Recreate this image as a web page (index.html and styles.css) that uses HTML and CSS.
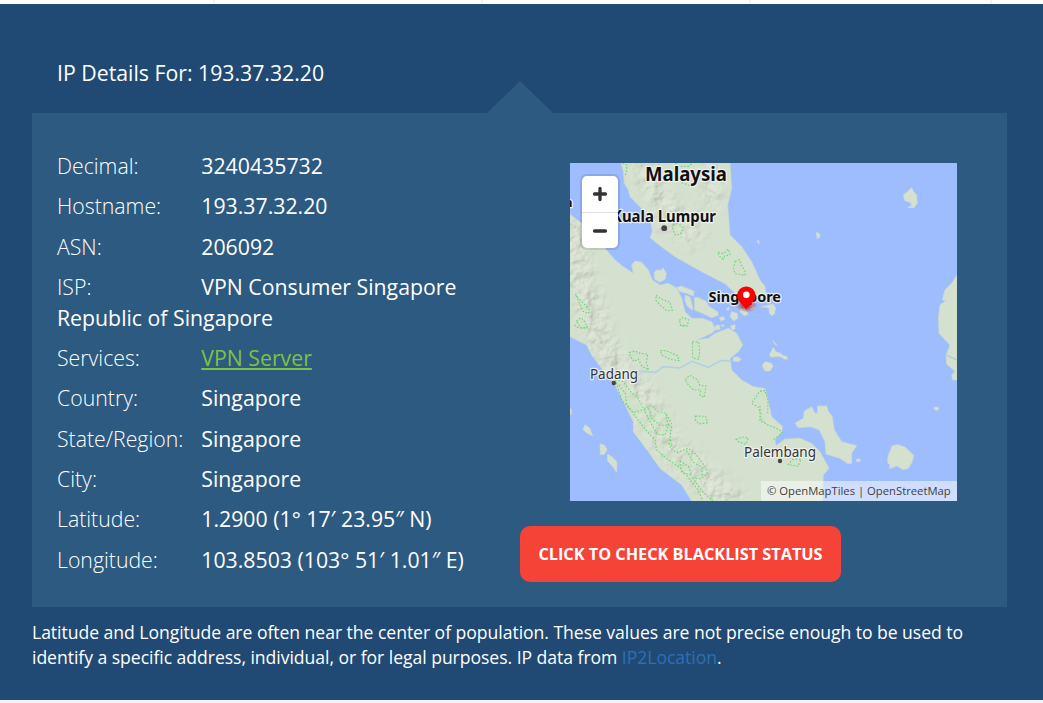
FILE: index.html
```html
<!DOCTYPE html>
<html lang="en">
<head>
<meta charset="utf-8">
<title>IP Details</title>
<link rel="stylesheet" href="styles.css">
</head>
<body>
<div class="tabs"><span class="tab tab-first"></span><span class="tab"></span><span class="tab"></span><span class="tab tab-last"></span></div>
<main class="details">
  <h1 class="title">IP Details For: 193.37.32.20</h1>
  <section class="panel">
    <div class="info">
      <p class="row"><span class="label">Decimal:</span><span>3240435732</span></p>
      <p class="row"><span class="label">Hostname:</span><span>193.37.32.20</span></p>
      <p class="row"><span class="label">ASN:</span><span>206092</span></p>
      <p class="row"><span class="label">ISP:</span><span>VPN Consumer Singapore Republic of Singapore</span></p>
      <p class="row"><span class="label">Services:</span><a class="service" href="#">VPN Server</a></p>
      <p class="row"><span class="label">Country:</span><span>Singapore</span></p>
      <p class="row"><span class="label">State/Region:</span><span>Singapore</span></p>
      <p class="row"><span class="label">City:</span><span>Singapore</span></p>
      <p class="row"><span class="label">Latitude:</span><span>1.2900 (1° 17′ 23.95″ N)</span></p>
      <p class="row"><span class="label">Longitude:</span><span>103.8503 (103° 51′ 1.01″ E)</span></p>
    </div>
    <div class="side">
      <div class="map">
        <svg class="map-art" viewBox="0 0 1161 1014" width="387" height="338">
          <defs>
            <filter id="relief" x="0" y="0" width="100%" height="100%" color-interpolation-filters="sRGB">
              <feTurbulence type="fractalNoise" baseFrequency=".03" numOctaves="3" seed="4" result="n"/>
              <feDiffuseLighting in="n" surfaceScale="9" lighting-color="#f8faf0" result="l"><feDistantLight azimuth="225" elevation="62"/></feDiffuseLighting>
              <feComposite in="l" in2="SourceGraphic" operator="in"/>
            </filter>
            <filter id="soft" x="-20%" y="-20%" width="140%" height="140%"><feGaussianBlur stdDeviation="22"/></filter>
            <radialGradient id="shade"><stop offset="0" stop-color="#700" stop-opacity=".85"/><stop offset="1" stop-color="#a00" stop-opacity="0"/></radialGradient>
            <clipPath id="land">
              <path d="M153 0L160 26 163 61 175 81 180 101 210 131 240 166 247 206 240 224 270 248 315 281 395 326 465 362 505 400 540 420 575 405 588 396 585 370 570 351 545 296 515 251 480 216 473 126 485 76 480 0Z"/>
              <path d="M0 154L35 181 105 256 135 291 160 311 190 331 185 306 195 294 215 298 235 321 247 351 270 366 295 361 320 376 335 406 345 446 365 466 395 466 425 476 437 500 425 511 380 531 415 526 435 511 475 496 500 511 518 546 505 566 480 586 485 621 515 651 550 671 585 676 595 716 605 761 638 791 635 806 615 831 618 848 645 828 690 826 725 841 750 866 777 916 760 936 757 1014 365 1014 335 966 270 916 235 866 190 806 190 776 165 726 140 676 130 656 95 616 65 576 50 546 0 521Z"/>
            </clipPath>
            <mask id="hills">
              <g fill="none" stroke="#fff" stroke-linecap="round" filter="url(#soft)">
                <path stroke-width="75" d="M10 190L30 340 105 560 220 700 300 850 420 960 490 1010"/>
                <path stroke-width="65" d="M225 10L260 100 370 220"/>
                <path stroke-width="50" d="M420 10L430 110"/>
              </g>
            </mask>
          </defs>
          <g class="land">
            <path d="M153 0L160 26 163 61 175 81 180 101 210 131 240 166 247 206 240 224 270 248 315 281 395 326 465 362 505 400 540 420 575 405 588 396 585 370 570 351 545 296 515 251 480 216 473 126 485 76 480 0Z"/>
            <path d="M0 154L35 181 105 256 135 291 160 311 190 331 185 306 195 294 215 298 235 321 247 351 270 366 295 361 320 376 335 406 345 446 365 466 395 466 425 476 437 500 425 511 380 531 415 526 435 511 475 496 500 511 518 546 505 566 480 586 485 621 515 651 550 671 585 676 595 716 605 761 638 791 635 806 615 831 618 848 645 828 690 826 725 841 750 866 777 916 760 936 757 1014 365 1014 335 966 270 916 235 866 190 806 190 776 165 726 140 676 130 656 95 616 65 576 50 546 0 521Z"/>
            <path d="M1161 336L1145 361 1125 381 1117 411 1128 412 1110 426 1105 466 1107 511 1140 546 1128 576 1130 603 1155 625 1145 636 1148 651 1161 651Z"/>
            <!-- Riau and Malacca Strait islands -->
            <g transform="translate(-15 -24)">
              <path d="M268 352L275 345 289 346 294 339 304 354 301 372 285 382 268 372Z"/>
              <path d="M335 397L350 394 386 408 386 423 362 414 342 409Z"/>
              <path d="M361 420L375 427 383 455 381 466 366 452 360 435Z"/>
              <path d="M388 428L397 427 425 440 431 454 458 470 460 481 440 488 410 474 388 465 389 451Z"/>
              <path d="M488 459L494 456 490 466 484 464ZM463 487L476 485 480 493 467 498ZM500 470L517 475 519 490 505 498 495 484ZM525 460L540 462 550 478 538 482 525 471ZM553 459L566 453 570 459 557 464Z"/>
              <path d="M497 512L510 509 510 522 500 525ZM450 513L462 509 466 523 452 525ZM576 261L580 254 583 266Z"/>
              <path d="M588 455L625 447 632 459 629 475 621 482 613 475 612 459Z"/>
            </g>
            <g transform="translate(570 -24)">
              <path d="M455 98L461 110 470 121 472 145 462 158 443 158 455 151 452 143 433 136 431 119 440 112Z"/>
              <path d="M168 231L180 238 179 247 172 251Z"/>
            </g>
            <g transform="translate(-15 486)">
              <path d="M505 97L519 96 529 103 520 110 504 108ZM467 0L478 0 473 6ZM15 247L20 257 19 268 15 269Z"/>
              <path d="M60 299L74 309 83 333 66 324 54 314ZM105 357L118 360 126 373 118 388 106 389ZM128 388L142 396 156 411 155 442 145 427 127 407Z"/>
            </g>
            <g transform="translate(570 486)">
              <path d="M40 67L48 81 62 85 68 91 79 94 83 102 73 103 65 97 53 94 34 97 28 90ZM10 115L18 110 34 115 39 124 30 138 15 138 7 123ZM38 46L51 60 46 59Z"/>
              <path d="M105 295L130 280 133 258 155 245 165 265 172 265 173 243 200 243 205 259 217 275 223 315 245 350 290 362 275 385 275 415 264 416 240 400 198 387 195 350 178 315 150 305 115 308Z"/>
              <path d="M397 362L413 359 435 366 461 391 457 410 445 430 430 434 410 423 388 431 390 419 383 413 384 393Z"/>
              <path d="M289 403L296 401 302 406 298 411 289 409ZM523 247L533 246 537 251 530 257 523 253Z"/>
            </g>
          </g>
          <g clip-path="url(#land)">
            <g mask="url(#hills)"><rect width="800" height="1014" filter="url(#relief)" opacity=".35"/></g>
            <path fill="#d7d3d3" d="M264 195L290 193 299 211 275 213 251 211Z"/>
          </g>
          <path class="river" d="M194 624L225 626 257 628 279 611 330 615 366 595 415 613 455 592 485 595M1130 577L1161 591"/>
          <g class="parks" transform="translate(-15 -24)">
            <path d="M173 24L186 31 184 55 178 62M331 24L343 34 372 34 381 24M350 83L375 92M325 207L342 205 354 220 346 238 331 240 323 222Z"/>
            <path d="M460 291L475 296 490 282 495 299 479 303 475 312 460 301ZM510 319L523 314 529 330 541 350 540 361 510 356 505 339Z"/>
            <path d="M273 421L287 431 315 442 322 466 305 467 285 450 273 437ZM31 417L41 430 56 445 74 466 70 476 54 469ZM34 498L48 488 62 503 66 519 48 520ZM343 496L353 488 371 494 367 512 348 514Z"/>
          </g>
          <g class="parks" transform="translate(-15 486)">
            <path d="M28 0L36 7 65 8 67 0M345 0L367 3M193 82L210 78 224 85 248 87 244 113 251 135 230 123 220 102 208 110 198 97ZM286 77L303 77 338 92 342 107 315 103 291 91ZM382 50L401 51 404 78 401 102 383 100Z"/>
            <path d="M360 164L374 151 397 164 405 181 423 183 418 217 405 211 407 195 386 195 370 180ZM391 273L422 274 427 293 401 297 391 284ZM513 343L532 336 550 339 543 358 520 350ZM600 197L583 200 560 235 580 247 588 267 586 280 600 293"/>
            <path d="M151 163L175 170 200 204 218 218 237 253 259 241 280 261 302 264 320 297 314 353 317 371 335 383 370 370 391 386 421 425 427 446 407 461 384 460 410 497 443 527M151 163L170 225 195 253 220 286 245 318 270 345 275 375 305 401 345 428 370 458 398 493 413 527"/>
            <path d="M162 180L182 207 184 239 205 263 237 253 258 296 278 329 300 329 310 302 302 270M251 250L260 280 285 301 318 300M316 345L323 363 309 356M345 407L370 424 380 450 350 443ZM365 377L385 412 411 426 411 455"/>
          </g>
          <g class="parks" transform="translate(570 486)">
            <path d="M0 198L14 196 24 225 23 265M0 242V288L24 300 50 310 67 322 58 331 38 346M97 403L123 402 115 424 84 419Z"/>
          </g>
          <g transform="scale(3)">
            <g class="place-dots"><circle cx="94.2" cy="65.2" r="2.9"/><circle cx="43.8" cy="220" r="2.2"/><circle cx="210" cy="298" r="2.2"/></g>
            <text class="place bold" x="75" y="18.3" font-size="18.8" textLength="82" lengthAdjust="spacingAndGlyphs">Malaysia</text>
            <text class="place bold" x="42" y="59" font-size="15.2" textLength="104" lengthAdjust="spacingAndGlyphs">Kuala Lumpur</text>
            <text class="place bold" x="138.5" y="138.6" font-size="14.6" textLength="72.5" lengthAdjust="spacingAndGlyphs">Singapore</text>
            <text class="place" x="20" y="216" font-size="14.4" textLength="48" lengthAdjust="spacingAndGlyphs">Padang</text>
            <text class="place" x="174" y="294" font-size="14.4" textLength="72" lengthAdjust="spacingAndGlyphs">Palembang</text>
            <text class="place bold" x="-6" y="44" font-size="13">n</text>
            <ellipse cx="176.5" cy="142" rx="11" ry="7.5" fill="url(#shade)"/>
            <path fill="red" d="M176.3 123.5a9 9 0 0 1 9.2 9c0 5.5-5.2 8.500-9.2 14-4-5.5-9.2-8.5-9.2-14a9 9 0 0 1 9.2-9z"/>
            <circle cx="176.3" cy="131.8" r="3.3" fill="#fff"/>
          </g>
        </svg>
        <div class="zoom">
          <button class="zoom-btn" aria-label="Zoom in"><svg width="16" height="16" viewBox="0 0 16 16"><path d="M8 2.5v11M2.5 8h11"/></svg></button>
          <button class="zoom-btn" aria-label="Zoom out"><svg width="16" height="16" viewBox="0 0 16 16"><path d="M2.5 8h11"/></svg></button>
        </div>
        <div class="credit">© OpenMapTiles | OpenStreetMap</div>
      </div>
      <button class="check">CLICK TO CHECK BLACKLIST STATUS</button>
    </div>
  </section>
  <p class="note">Latitude and Longitude are often near the center of population. These values are not precise enough to be used to identify a specific address, individual, or for legal purposes. IP data from <a class="source" href="#">IP2Location</a>.</p>
</main>
</body>
</html>
```
FILE: styles.css
```css
* { box-sizing: border-box; }
body {
  margin: 0;
  height: 703px;
  overflow: hidden;
  background: #f3f3f3;
  color: #fff;
  font-family: "Open Sans", "Noto Sans", sans-serif;
}
.tabs { display: flex; height: 4px; background: #fff; }
.tab { width: 268px; border-right: 2px solid #f3f3f3; }
.tab-first { width: 215px; }
.tab-last { width: 241px; }
.details { height: 696px; padding: 54px 36px 0 32px; background: #204a73; }
.title { margin: 0 0 25px 25px; font-size: 21.28px; font-weight: 400; line-height: 30px; height: 30px; }
.panel {
  position: relative;
  display: flex;
  width: 975px;
  height: 494px;
  padding: 38px 50px 0 25px;
  background: #2d5a80;
}
.panel::before {
  content: "";
  position: absolute;
  left: 455px;
  top: -32px;
  width: 66px;
  height: 32px;
  background: #2d5a80;
  clip-path: polygon(50% 0, 100% 100%, 0 100%);
}
.info { width: 463px; padding-top: .15px; font-size: 21.28px; line-height: 30.35px; }
.row { width: 440px; margin: 0 0 10px; }
.label { display: inline-block; width: 144.3px; font-weight: 300; }
.service { color: #7dc242; text-decoration: underline; text-decoration-thickness: 2px; text-underline-offset: 2px; }
.side { padding-top: 12px; }
.map { position: relative; width: 387px; height: 338px; margin-left: 50px; overflow: hidden; background: #9ebdff; }
.map-art { display: block; }
.land { fill: #d5e1cf; stroke: #cbd9ca; stroke-width: 2; }
.river { fill: none; stroke: #b0d1df; stroke-width: 5; }
.parks { fill: #cde5c2; fill-opacity: .25; stroke: #70d778; stroke-width: 3.5; stroke-dasharray: 5 5; }
.place-dots { fill: #444; }
.place { font-family: "Noto Sans", sans-serif; fill: #333; stroke: #f2f4f1; stroke-opacity: .85; stroke-width: 2.5px; stroke-linejoin: round; paint-order: stroke; }
.bold { font-weight: 700; fill: #111; }
.zoom { position: absolute; left: 12px; top: 13px; width: 36px; border-radius: 5px; background: #fff; box-shadow: 0 0 0 2px rgba(0, 0, 0, .1); }
.zoom-btn { display: flex; align-items: center; justify-content: center; width: 36px; height: 36px; padding: 0; border: 0; background: none; }
.zoom-btn + .zoom-btn { border-top: 1px solid #ddd; }
.zoom-btn path { fill: none; stroke: #333; stroke-width: 3.3; stroke-linecap: round; }
.credit { position: absolute; right: 0; bottom: 0; width: 196px; height: 20px; padding-left: 6px; background: rgba(255, 255, 255, .5); color: #404040; font-size: 11.27px; line-height: 20px; white-space: nowrap; }
.check { display: block; width: 321px; height: 56px; margin-top: 25px; padding: 0; border: 0; border-radius: 10px; background: #f54337; color: #fff; font-family: inherit; font-size: 16.27px; font-weight: 700; white-space: nowrap; }
.note { width: 975px; margin: 13px 0 0; font-size: 17.6px; letter-spacing: -.045px; line-height: 25px; }
.source { color: #2e6fb4; text-decoration: none; }
```
